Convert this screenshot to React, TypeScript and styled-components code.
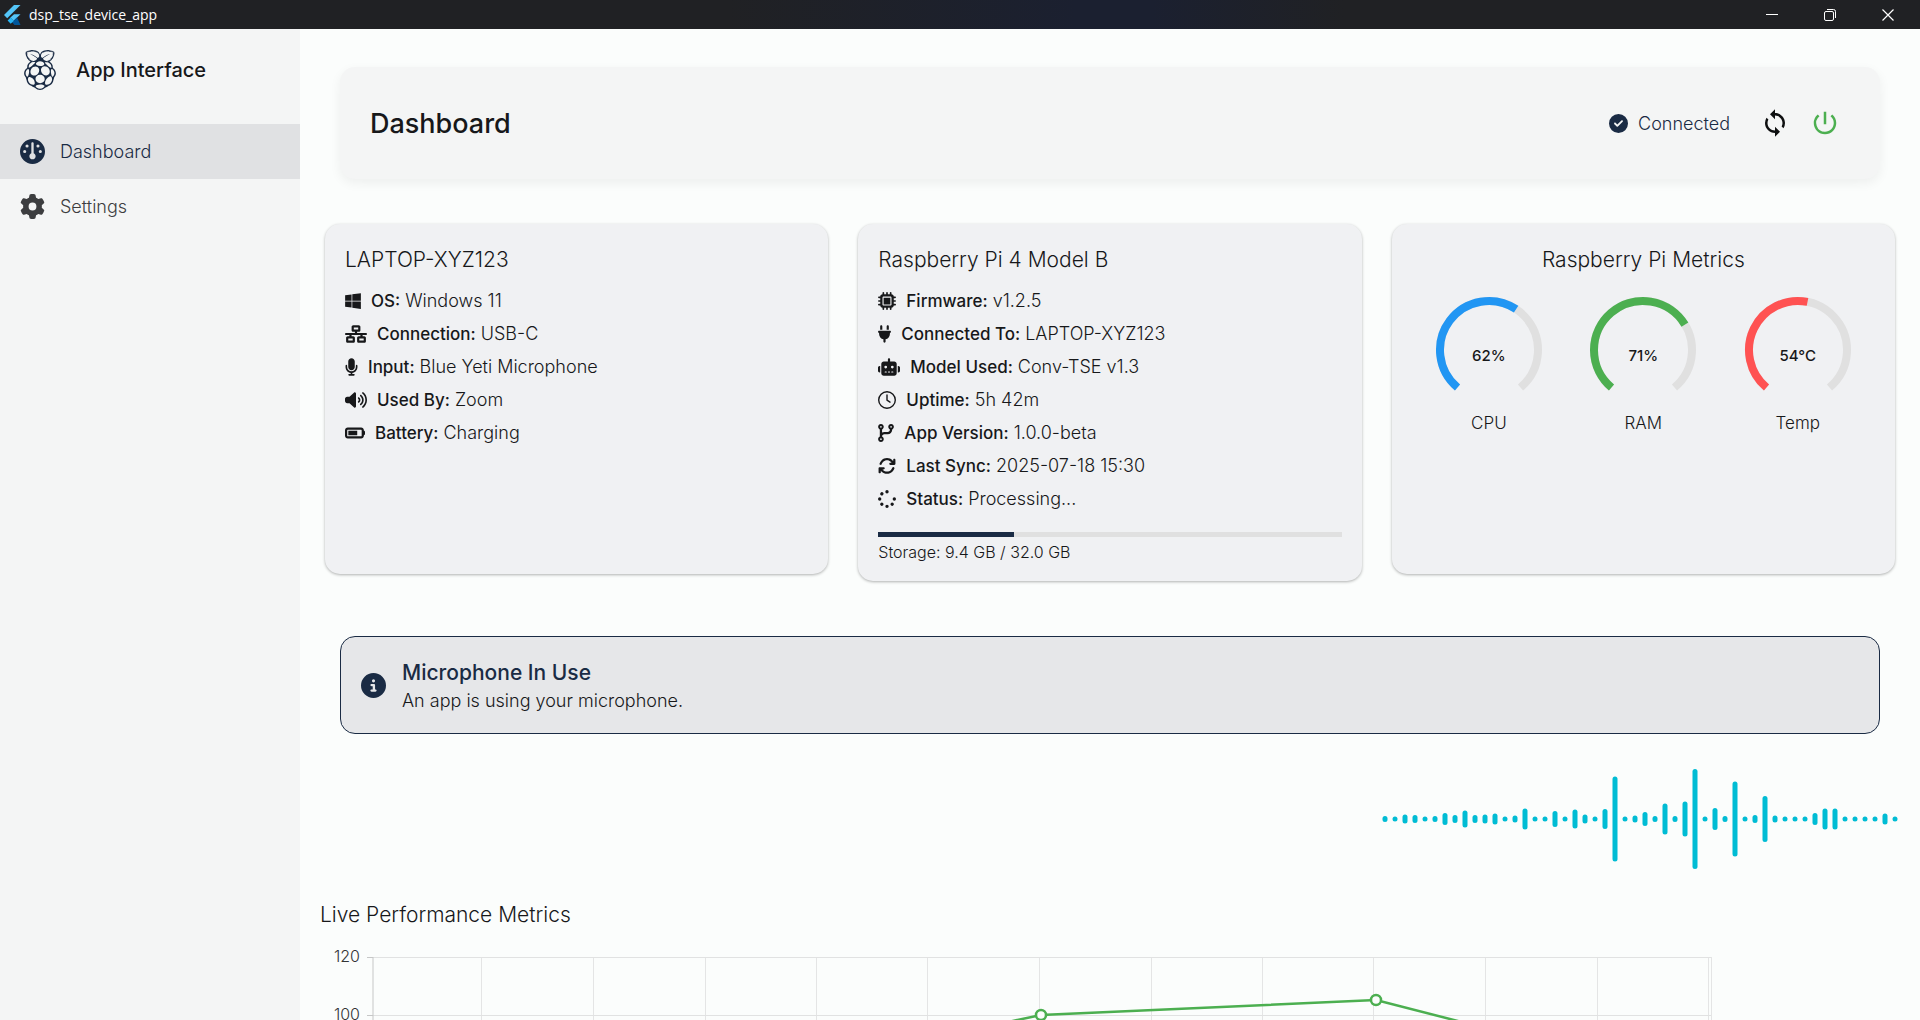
import React from "react";
import styled, { createGlobalStyle } from "styled-components";
import {
  FaArrowsRotate,
  FaBatteryThreeQuarters,
  FaCircleCheck,
  FaCircleInfo,
  FaCodeBranch,
  FaGauge,
  FaGear,
  FaMicrochip,
  FaMicrophone,
  FaNetworkWired,
  FaPlug,
  FaRaspberryPi,
  FaRobot,
  FaSpinner,
  FaVolumeHigh,
  FaWindows,
} from "react-icons/fa6";
import { MdPowerSettingsNew, MdSync } from "react-icons/md";

const navy = "#1a2b44";
const ink = "#17181a";
const page = "#fbfdfc";
const panel = "#f4f5f5";

const GlobalStyle = createGlobalStyle`
  *, *::before, *::after { box-sizing: border-box; }
  body {
    margin: 0;
    background: ${page};
    color: ${ink};
    font-family: Inter, "Liberation Sans", sans-serif;
    font-weight: 300;
  }
  h1, h2, p, ul { margin: 0; padding: 0; }
  button { margin: 0; padding: 0; border: 0; background: none; font: inherit; cursor: pointer; }
`;

const Shell = styled.div`
  display: flex;
  flex-direction: column;
  height: 100vh;
`;

const TitleBar = styled.header`
  display: flex;
  align-items: center;
  flex: none;
  height: 29px;
  padding: 0 3px 0 4px;
  gap: 8px;
  background: linear-gradient(90deg, #202124 38%, #1b2030 56%, #1b2030 60%, #202124 70%);
  color: #ffffff;
  font-family: "Open Sans", "Noto Sans", sans-serif;
  font-size: 14px;
  font-weight: 400;
`;

const WindowControls = styled.div`
  display: flex;
  margin-left: auto;
`;

const WindowButton = styled.button`
  display: flex;
  align-items: center;
  justify-content: center;
  width: 58px;
  height: 29px;
  color: #ffffff;
`;

const Body = styled.div`
  display: flex;
  flex: 1;
  min-height: 0;
`;

const Sidebar = styled.aside`
  flex: none;
  width: 300px;
  background: ${panel};
`;

const Brand = styled.div`
  display: flex;
  align-items: center;
  gap: 20px;
  height: 95px;
  padding: 0 24px 14px;
  font-size: 20px;
  font-weight: 500;

  svg {
    width: 32px;
    color: ${navy};
  }
`;

const NavItem = styled.a<{ $active?: boolean }>`
  display: flex;
  align-items: center;
  gap: 15px;
  height: 55px;
  padding: 0 20px;
  background: ${(p) => (p.$active ? "#e0e1e3" : "transparent")};
  color: ${(p) => (p.$active ? navy : "#3c3d3f")};
  font-size: 18px;
  text-decoration: none;
`;

const Main = styled.main`
  flex: 1;
  min-width: 0;
  overflow-y: auto;
  scrollbar-width: none;
  padding: 38px 20px 40px;
`;

const PageHeader = styled.section`
  display: flex;
  align-items: center;
  margin: 0 20px 45px;
  height: 112px;
  padding: 0 40px 0 30px;
  border-radius: 15px;
  background: ${panel};
  box-shadow: 0 4px 12px rgba(0, 0, 0, 0.06);
`;

const PageTitle = styled.h1`
  flex: 1;
  padding-top: 2px;
  font-size: 27px;
  font-weight: 500;
  line-height: 34px;
`;

const Connection = styled.div`
  display: flex;
  align-items: center;
  gap: 10px;
  margin-right: 30px;
  color: ${navy};
  font-size: 18px;
`;

const IconButton = styled.button<{ $color: string }>`
  display: flex;
  align-items: center;
  justify-content: center;
  width: 30px;
  height: 30px;
  margin-left: 20px;
  color: ${(p) => p.$color};

  &:first-of-type { margin-left: 0; }
`;

const CardGrid = styled.div`
  display: grid;
  grid-template-columns: repeat(3, minmax(0, 1fr));
  align-items: start;
  gap: 30px;
  margin: 0 5px 55px;
`;

const Card = styled.section`
  min-height: 350px;
  padding: 20px;
  border-radius: 15px;
  background: #f0f1f3;
  box-shadow: 0 1px 3px rgba(0, 0, 0, 0.3);
`;

const Heading = styled.h2<{ $center?: boolean }>`
  font-size: 21px;
  font-weight: 300;
  line-height: 32px;
  text-align: ${(p) => (p.$center ? "center" : "left")};
`;

const InfoList = styled.ul`
  margin-top: 8px;
  list-style: none;
`;

const InfoRow = styled.li<{ $iconWidth: number }>`
  display: flex;
  align-items: center;
  height: 33px;
  gap: 5px;
  font-size: 18px;
  white-space: nowrap;

  svg {
    flex: none;
    width: ${(p) => p.$iconWidth}px;
    margin-right: 5px;
  }
`;

const InfoLabel = styled.span`
  font-size: 17px;
  font-weight: 500;
`;

const StorageTrack = styled.div`
  height: 5px;
  margin-top: 17px;
  background: #e0e0e0;
`;

const StorageFill = styled.div`
  height: 100%;
  background: ${navy};
`;

const StorageText = styled.p`
  padding-top: 6px;
  font-size: 16px;
  line-height: 18px;
`;

const GaugeRow = styled.div`
  display: grid;
  grid-template-columns: repeat(3, minmax(0, 1fr));
  margin-top: 20px;
`;

const GaugeFigure = styled.div`
  display: flex;
  flex-direction: column;
  align-items: center;
  gap: 9px;
  font-size: 17px;
  line-height: 20px;
`;

const GaugeDial = styled.div`
  display: grid;
  place-items: center;

  > * { grid-area: 1 / 1; }
`;

const GaugeValue = styled.span`
  padding-top: 12px;
  font-size: 15px;
  font-weight: 500;
`;

const Banner = styled.section`
  display: flex;
  align-items: center;
  gap: 16px;
  height: 98px;
  margin: 0 20px 35px;
  padding: 0 20px;
  border: 1px solid ${navy};
  border-radius: 15px;
  background: #e6e7e9;
  font-size: 18px;
  line-height: 28px;

  > svg { color: ${navy}; }
`;

const BannerText = styled.div`
  padding-top: 4px;
`;

const BannerTitle = styled.h2`
  color: ${navy};
  font-size: 21px;
  font-weight: 500;
  line-height: 28px;
`;

const WaveRow = styled.div`
  display: flex;
  justify-content: flex-end;
  height: 100px;
  margin-bottom: 30px;
`;

const Chart = styled.svg`
  display: block;
  margin-top: 12px;
  font-size: 16px;
`;

const FlutterLogo = () => (
  <svg width="17" height="20" viewBox="0 0 17 20" aria-hidden="true">
    <path d="M10 0H16.500L3.200 13.200L0 10Z" fill="#54c5f8" />
    <path d="M10 9.200H16.500L9.700 15.800L6.400 12.600Z" fill="#54c5f8" />
    <path d="M9.700 15.800L13 12.600L16.500 20H10.500L6.800 15.800Z" fill="#01579b" />
    <path d="M3.600 15.500L6.600 12.400L9.900 15.700L6.700 18.700Z" fill="#29b6f6" />
  </svg>
);

const ClockIcon = ({ size = 18 }: { size?: number }) => (
  <svg
    width={size}
    height={size}
    viewBox="0 0 18 18"
    fill="none"
    stroke="currentColor"
    strokeWidth="1.400"
    strokeLinecap="round"
    strokeLinejoin="round"
    aria-hidden="true"
  >
    <circle cx="9" cy="9" r="8.300" />
    <path d="M9 4V9.200L12 11.200" />
  </svg>
);

const polar = (deg: number, r: number) => {
  const a = ((deg - 90) * Math.PI) / 180;
  return `${54 + r * Math.cos(a)} ${54 + r * Math.sin(a)}`;
};

const arc = (from: number, to: number) =>
  `M${polar(from, 49)}A49 49 0 ${to - from > 180 ? 1 : 0} 1 ${polar(to, 49)}`;

interface GaugeProps {
  percent: number;
  text: string;
  label: string;
  color: string;
}

const Gauge = ({ percent, text, label, color }: GaugeProps) => (
  <GaugeFigure>
    <GaugeDial>
      <svg width="108" height="108" fill="none" strokeWidth="8" aria-hidden="true">
        <path d={arc(-140, 140)} stroke="#e0e0e0" />
        <path d={arc(-140, -140 + 2.8 * percent)} stroke={color} />
      </svg>
      <GaugeValue>{text}</GaugeValue>
    </GaugeDial>
    {label}
  </GaugeFigure>
);

const gauges: GaugeProps[] = [
  { percent: 62, text: "62%", label: "CPU", color: "#2196f3" },
  { percent: 71, text: "71%", label: "RAM", color: "#4caf50" },
  { percent: 54, text: "54°C", label: "Temp", color: "#ff5252" },
];

type Info = [React.ComponentType<{ size?: number }>, number, string, string];

const laptop: Info[] = [
  [FaWindows, 16, "OS:", "Windows 11"],
  [FaNetworkWired, 22, "Connection:", "USB-C"],
  [FaMicrophone, 13, "Input:", "Blue Yeti Microphone"],
  [FaVolumeHigh, 22, "Used By:", "Zoom"],
  [FaBatteryThreeQuarters, 20, "Battery:", "Charging"],
];

const pi: Info[] = [
  [FaMicrochip, 18, "Firmware:", "v1.2.5"],
  [FaPlug, 13, "Connected To:", "LAPTOP-XYZ123"],
  [FaRobot, 22, "Model Used:", "Conv-TSE v1.3"],
  [ClockIcon, 18, "Uptime:", "5h 42m"],
  [FaCodeBranch, 16, "App Version:", "1.0.0-beta"],
  [FaArrowsRotate, 18, "Last Sync:", "2025-07-18 15:30"],
  [FaSpinner, 18, "Status:", "Processing..."],
];

const InfoRows = ({ rows }: { rows: Info[] }) => (
  <InfoList>
    {rows.map(([Icon, iconWidth, label, value]) => (
      <InfoRow key={label} $iconWidth={iconWidth}>
        <Icon size={18} />
        <InfoLabel>{label}</InfoLabel>
        {value}
      </InfoRow>
    ))}
  </InfoList>
);

const levels = [
  6, 5, 9, 8, 5, 6, 12, 8, 17, 8, 9, 11, 5, 7, 21, 5, 5, 16, 5, 19, 9, 5, 20, 85, 5, 7, 14, 6,
  31, 6, 35, 100, 5, 22, 6, 75, 5, 8, 46, 7, 5, 5, 5, 12, 21, 21, 5, 5, 5, 5, 11, 5,
];

const Waveform = () => (
  <svg width={levels.length * 10} height="100" fill="#00bcd4" aria-hidden="true">
    {levels.map((h, i) => (
      <rect key={i} x={i * 10 + 2.5} y={50 - h / 2} width="5" height={h} rx="2.5" />
    ))}
  </svg>
);

const gridX = [161, 273, 385, 496, 607, 719, 831, 942, 1053, 1165, 1277, 1388, 1391];
const ticks = [120, 100, 80, 60, 40, 20, 0];
const tickY = (v: number) => 14 + Math.round(((120 - v) * 23) / 8);
const samples: [number, number][] = [
  [53, 80],
  [387, 75],
  [721, 100],
  [1056, 105],
  [1391, 75],
];

const PerformanceChart = () => (
  <Chart width="1410" height="380">
    {gridX.map((x) => (
      <line key={x} x1={x + 0.5} x2={x + 0.5} y1="14" y2="359" stroke="#e4e5e5" />
    ))}
    {ticks.map((v) => (
      <g key={v}>
        <line x1="53" x2="1391" y1={tickY(v) + 0.5} y2={tickY(v) + 0.5} stroke="#e1e2e2" />
        <line x1="47" x2="53" y1={tickY(v) + 0.5} y2={tickY(v) + 0.5} stroke="#c6c7c7" />
        <text x="40" y={tickY(v) + 5} textAnchor="end" fill="#333436">
          {v}
        </text>
      </g>
    ))}
    <line x1="53" x2="53" y1="14" y2="359" stroke="#c6c7c7" />
    <polyline
      points={samples.map(([x, v]) => `${x},${tickY(v)}`).join(" ")}
      fill="none"
      stroke="#4caf50"
      strokeWidth="2.5"
    />
    {samples.map(([x, v]) => (
      <circle key={x} cx={x} cy={tickY(v)} r="5" fill={page} stroke="#4caf50" strokeWidth="2.5" />
    ))}
  </Chart>
);

export default function App() {
  return (
    <Shell>
      <GlobalStyle />
      <TitleBar>
        <FlutterLogo />
        <span>dsp_tse_device_app</span>
        <WindowControls>
          <WindowButton aria-label="Minimize">
            <svg width="12" height="12" fill="none" stroke="currentColor">
              <path d="M0 5.500H12" />
            </svg>
          </WindowButton>
          <WindowButton aria-label="Restore">
            <svg width="12" height="12" fill="none" stroke="currentColor">
              <rect x="0.500" y="2.500" width="9" height="9" rx="1.500" />
              <path d="M3 0.500H9.500A2 2 0 0 1 11.500 2.500V9" />
            </svg>
          </WindowButton>
          <WindowButton aria-label="Close">
            <svg width="12" height="12" fill="none" stroke="currentColor" strokeWidth="1.200">
              <path d="M0.500 0.500L11.500 11.500M11.500 0.500L0.500 11.500" />
            </svg>
          </WindowButton>
        </WindowControls>
      </TitleBar>
      <Body>
        <Sidebar>
          <Brand>
            <FaRaspberryPi size={40} />
            App Interface
          </Brand>
          <nav>
            <NavItem href="#dashboard" $active>
              <FaGauge size={25} />
              Dashboard
            </NavItem>
            <NavItem href="#settings">
              <FaGear size={25} />
              Settings
            </NavItem>
          </nav>
        </Sidebar>
        <Main>
          <PageHeader>
            <PageTitle>Dashboard</PageTitle>
            <Connection>
              <FaCircleCheck size={19} />
              Connected
            </Connection>
            <IconButton $color="#0e0f10" aria-label="Sync">
              <MdSync size={30} />
            </IconButton>
            <IconButton $color="#4caf50" aria-label="Power">
              <MdPowerSettingsNew size={30} />
            </IconButton>
          </PageHeader>
          <CardGrid>
            <Card>
              <Heading>LAPTOP-XYZ123</Heading>
              <InfoRows rows={laptop} />
            </Card>
            <Card>
              <Heading>Raspberry Pi 4 Model B</Heading>
              <InfoRows rows={pi} />
              <StorageTrack>
                <StorageFill style={{ width: `${(9.4 / 32) * 100}%` }} />
              </StorageTrack>
              <StorageText>Storage: 9.4 GB / 32.0 GB</StorageText>
            </Card>
            <Card>
              <Heading $center>Raspberry Pi Metrics</Heading>
              <GaugeRow>
                {gauges.map((g) => (
                  <Gauge key={g.label} {...g} />
                ))}
              </GaugeRow>
            </Card>
          </CardGrid>
          <Banner>
            <FaCircleInfo size={25} />
            <BannerText>
              <BannerTitle>Microphone In Use</BannerTitle>
              <p>An app is using your microphone.</p>
            </BannerText>
          </Banner>
          <WaveRow>
            <Waveform />
          </WaveRow>
          <Heading>Live Performance Metrics</Heading>
          <PerformanceChart />
        </Main>
      </Body>
    </Shell>
  );
}
